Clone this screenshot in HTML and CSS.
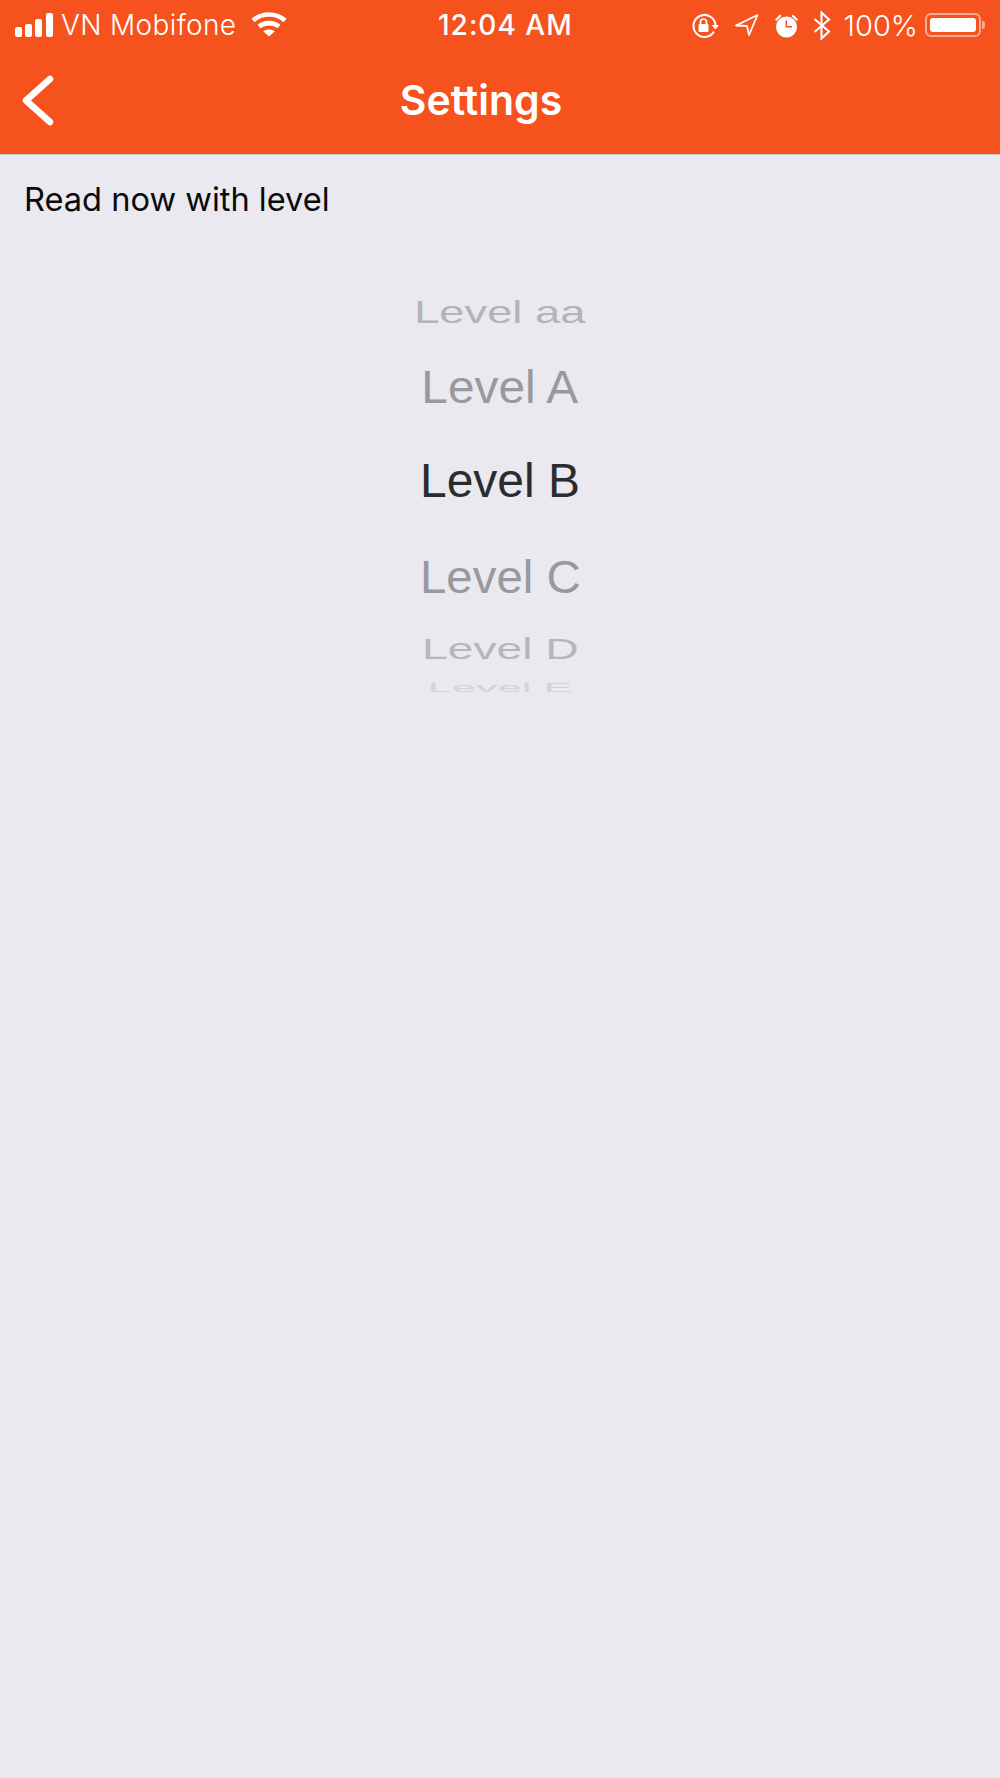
FILE: index.html
```html
<!DOCTYPE html>
<html lang="en">
<head>
<meta charset="utf-8">
<title>Settings</title>
<link rel="stylesheet" href="styles.css">
</head>
<body>
<header class="top">
  <div class="status">
    <div class="status-left">
      <svg class="ico-signal" width="40" height="24" viewBox="0 0 40 24" fill="#fff">
        <rect x="0" y="14" width="7" height="10" rx="2"/>
        <rect x="10" y="11" width="7" height="13" rx="2"/>
        <rect x="20" y="6" width="7" height="18" rx="2"/>
        <rect x="31" y="0" width="7" height="24" rx="2"/>
      </svg>
      <span class="carrier">VN Mobifone</span>
      <svg class="ico-wifi" width="36" height="26" viewBox="0 0 36 26" fill="none" stroke="#fff" stroke-width="4.6">
        <path d="M2 9.5C11 1.5 25 1.5 34 9.5"/>
        <path d="M8 15.5C13.500 11 22.500 11 28 15.500"/>
        <path d="M18 25.500L12.200 20.300C15.500 17.800 20.500 17.800 23.800 20.300Z" fill="#fff" stroke="none"/>
      </svg>
    </div>
    <div class="time">12:04 AM</div>
    <div class="status-right">
      <svg width="29" height="25" viewBox="0 0 29 25" fill="none" stroke="#fff" stroke-width="2">
        <path d="M24.500 12.500A11 11 0 1 0 23 18.500"/>
        <path d="M20.500 12H28L24.300 16.500Z" fill="#fff" stroke="none"/>
        <rect x="7.500" y="11" width="10" height="8" rx="1.200" fill="#fff" stroke="none"/>
        <path d="M9.500 11V9a3 3 0 0 1 6 0V11" stroke-width="1.700"/>
      </svg>
      <svg class="ico-loc" width="24" height="22" viewBox="0 0 24 22" fill="none" stroke="#fff" stroke-width="1.800" stroke-linejoin="round">
        <path d="M22.500 1L1 11.500L12 12L14 21Z"/>
      </svg>
      <svg class="ico-alarm" width="25" height="25" viewBox="0 0 25 25" fill="#fff">
        <path d="M1 6.500L6 1.500L7.500 3L2.500 8ZM24 6.500L19 1.500L17.500 3L22.500 8Z"/>
        <path fill-rule="evenodd" d="M12.500 3.500a10.500 10.500 0 1 1 0 21a10.500 10.500 0 1 1 0-21ZM11.500 7.500V14.500H18V13H13V7.500Z"/>
      </svg>
      <svg class="ico-bt" width="18" height="29" viewBox="0 0 18 29" fill="none" stroke="#fff" stroke-width="2.100">
        <path d="M1.500 8L16 20.500L8.500 27.500V1.500L16 8.500L1.500 21"/>
      </svg>
      <span class="battery-pct">100%</span>
      <div class="battery">
        <div class="battery-shell"><div class="battery-fill"></div></div>
        <div class="battery-nub"></div>
      </div>
    </div>
  </div>
  <nav class="bar">
    <svg class="back" width="32" height="52" viewBox="0 0 32 52" fill="none" stroke="#fff" stroke-width="6.500" stroke-linecap="round" stroke-linejoin="round">
      <path d="M28 5L4 26.500L28 48"/>
    </svg>
    <h1 class="title">Settings</h1>
  </nav>
</header>
<main class="content">
  <p class="label">Read now with level</p>
  <div class="picker">
    <div class="opt opt-aa">Level aa</div>
    <div class="opt opt-a">Level A</div>
    <div class="opt opt-b">Level B</div>
    <div class="opt opt-c">Level C</div>
    <div class="opt opt-d">Level D</div>
    <div class="opt opt-e">Level E</div>
  </div>
</main>
</body>
</html>
```
FILE: styles.css
```css
* { box-sizing: border-box; }
html, body { margin: 0; padding: 0; }
body {
  width: 1000px;
  height: 1778px;
  background: #e9e9ef;
  font-family: Inter, "Liberation Sans", sans-serif;
  overflow: hidden;
}
.top {
  height: 155px;
  background: #f6521e;
  border-bottom: 1px solid #c9c9d0;
  color: #fff;
}
.status {
  height: 50px;
  display: flex;
  align-items: center;
  padding: 0 15px;
  position: relative;
}
.status-left {
  display: flex;
  align-items: center;
  width: 423px;
}
.ico-signal { margin-right: 6px; }
.carrier {
  font-size: 28px;
  font-weight: 300;
  letter-spacing: 0.35px;
  margin-right: 15px;
}
.ico-wifi { margin-top: -2px; }
.time {
  font-size: 28px;
  font-weight: 500;
  letter-spacing: 1px;
  width: 132px;
  white-space: nowrap;
}
.status-right {
  display: flex;
  align-items: center;
  margin-left: auto;
}
.status-right svg { flex: none; }
.ico-loc { margin-left: 15px; }
.ico-alarm { margin-left: 15px; }
.ico-bt { margin-left: 14px; }
.battery-pct {
  font-size: 29px;
  font-weight: 300;
  margin-left: 13px;
  margin-right: 7px;
}
.battery { display: flex; align-items: center; }
.battery-shell {
  width: 56px;
  height: 24px;
  border: 2px solid #fcaa90;
  border-radius: 6px;
  padding: 3px;
}
.battery-fill {
  height: 100%;
  background: #fff;
  border-radius: 3px;
}
.battery-nub {
  width: 3px;
  height: 8px;
  background: #fcaa90;
  border-radius: 0 3px 3px 0;
  margin-left: 1px;
}
.bar {
  height: 104px;
  display: flex;
  align-items: center;
  padding-left: 22px;
  padding-bottom: 4px;
}
.back { flex: none; }
.title {
  margin: 0;
  flex: 1;
  text-align: center;
  font-size: 41px;
  font-weight: 600;
  padding-right: 92px;
}
.label {
  margin: 0;
  padding: 26px 0 0 24px;
  font-size: 32.6px;
  line-height: 37px;
  color: #0a0a0c;
}
.picker {
  margin-top: 0;
  padding-top: 75px;
  display: flex;
  flex-direction: column;
  align-items: center;
  font-family: "Liberation Sans", Arial, sans-serif;
  font-size: 48px;
}
.opt {
  height: 40px;
  line-height: 40px;
  white-space: nowrap;
  flex: none;
}
.opt-aa { color: #b3b3b8; transform: scale(0.943, 0.65); }
.opt-a { color: #99999d; transform: scale(0.996, 0.96); margin-top: 35px; }
.opt-b { color: #2c2c30; margin-top: 53px; }
.opt-c { color: #99999d; transform: scale(0.988, 0.96); margin-top: 57px; }
.opt-d { color: #b6b6bb; transform: scale(0.963, 0.62); margin-top: 31px; }
.opt-e { color: #d3d3d8; transform: scale(0.903, 0.25); margin-top: -1px; }
```
